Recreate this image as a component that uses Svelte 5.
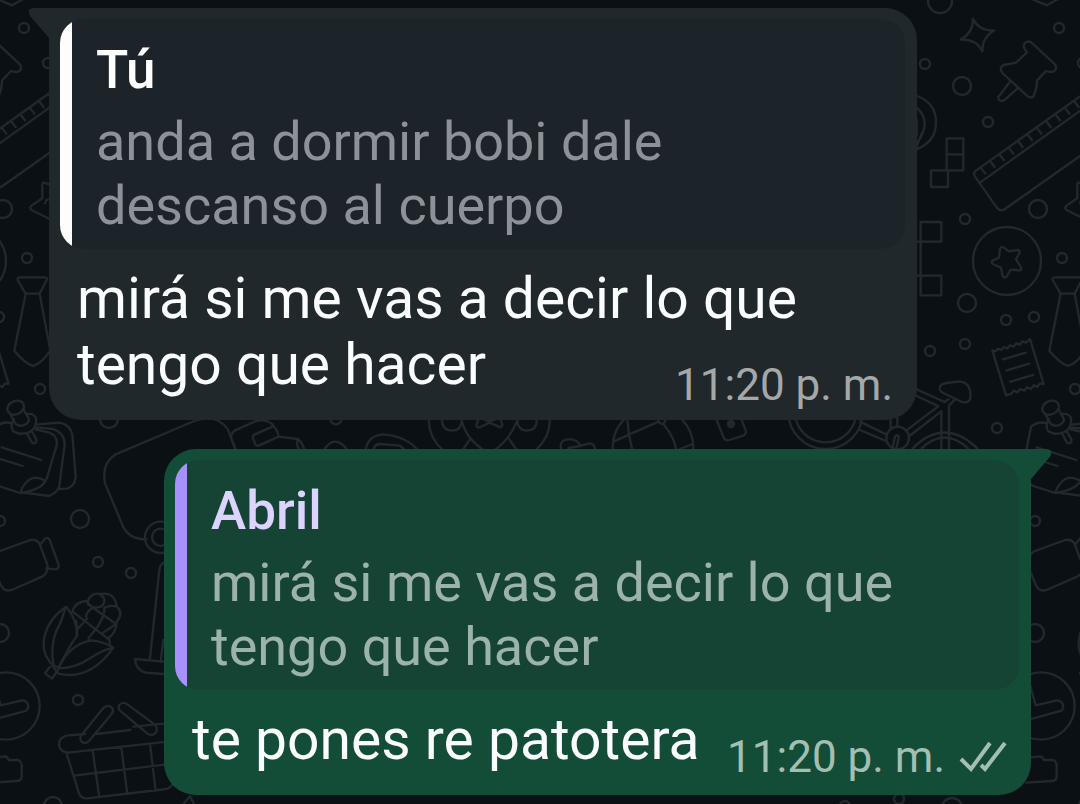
<script>
	const messages = [
		{
			own: false,
			author: 'Tú',
			quote: 'anda a dormir bobi dale descanso al cuerpo',
			text: 'mirá si me vas a decir lo que tengo que hacer',
			time: '11:20 p. m.'
		},
		{
			own: true,
			author: 'Abril',
			quote: 'mirá si me vas a decir lo que tengo que hacer',
			text: 'te pones re patotera',
			time: '11:20 p. m.'
		}
	];

	// small circles scattered over the wallpaper: x, y, radius
	const dots = [
		[24, 28, 5], [940, 1, 12], [925, 64, 5], [962, 86, 9], [988, 122, 5], [48, 63, 5],
		[1038, 209, 9], [965, 219, 5], [1062, 258, 5], [967, 303, 9], [1006, 320, 5],
		[1034, 317, 5], [930, 351, 5], [965, 344, 5], [40, 389, 5], [997, 428, 5],
		[109, 419, 9], [80, 519, 9], [98, 562, 5], [131, 573, 5], [0, 521, 5],
		[0, 633, 9], [78, 700, 5], [53, 806, 9], [899, 799, 5], [952, 808, 10], [845, 806, 5]
	];

	const ticks = [0, 1, 2, 3, 4, 5, 6, 7, 8, 9, 10, 11];
</script>

<svelte:head>
	<title>Chat</title>
</svelte:head>

<main class="chat">
	<svg class="wallpaper" aria-hidden="true">
		<g id="doodles">
			<g class="dots">
				{#each dots as [x, y, r]}
					<circle cx={x} cy={y} {r} />
				{/each}
			</g>

			<!-- sparkle, pushpin, blocks, ruler -->
			<g transform="translate(900 0) scale(.3333)">
				<path d="M398-2L441 16L473-2" />
				<path d="M219 56Q236 93 283 91Q246 113 247 154Q228 116 182 119Q220 97 219 56Z" />
				<path d="M376 151Q366 132 379 126Q390 121 399 132L465 193Q473 208 460 215Q450 218 438 213L411 242Q410 270 401 288Q394 297 383 289L307 219Q296 203 311 195L348 188L381 157Z" />
				<path d="M331 244L295 291Q294 303 306 303L314 300L353 265" />
				<path d="M50 288Q108 308 108 367Q108 425 50 448M50 323Q74 345 74 370Q74 400 50 430M50 360V405M66 398L50 440" />
				<path d="M140 415H190V511H140ZM140 463H190M93 511H144V561H93Z" />
				<path d="M575 264L228 512Q218 519 225 530L290 622Q301 637 315 627L570 447M240 548L570 311" />
				{#each ticks as n}
					<path d="M{242 + n * 28} {503 - n * 20}l14 18" />
				{/each}
				<path d="M570 560L538 548Q532 546 532 555L532 595L500 617Q491 625 501 631L560 660" />
				<path d="M540 610Q543 598 552 598" />
			</g>

			<!-- badge, tie, receipt, bicycle frame -->
			<g transform="translate(900 200) scale(.3333)">
				<path d="M50 125H124V66H62V286H124V227H50" />
				<circle cx="321" cy="183" r="102" />
				<path d="M312 143L326 154L354 150Q362 152 358 160L348 178L364 204Q365 212 356 211L332 209L320 230Q313 236 308 228L303 203L278 192Q271 187 278 182L297 173L300 147Q303 138 312 143Z" />
				<path d="M463 232H540Q548 233 545 240L524 281H482L458 240Q456 233 463 232ZM482 281L448 452Q478 488 504 498Q530 490 556 452L524 281" />
				<path d="M277 451L287 454L294 446L304 450L312 441L323 445L330 436L341 440L349 430L360 434L367 424L378 428L390 417L431 552L420 550L412 561L402 556L392 567L381 562L373 572L361 567L353 577L341 572L333 582L318 586Z" />
				<path d="M309 478L378 458M320 511L388 491M331 545L400 525" />
				<path d="M50 568L134 606L146 598M50 588L115 619L18 692M165 598L147 617V750M124 634L28 708M124 634V750" />
				<path d="M120 561Q122 552 140 549L180 544Q207 548 211 575V596Q204 611 186 606L130 579Q116 572 120 561Z" />
				<path d="M38 745Q133 650 232 745M65 745Q133 680 204 745" />
				<circle cx="-7" cy="714" r="34" />
				<path d="M-24 750L-15 710Q-9 700-3 711L-12 750M-120 665L-40 704M-120 690L-45 722M-28 650V684M-8 650V680" />
			</g>

			<!-- balloons, globe, tag, bicycle wheel -->
			<g transform="translate(420 400) scale(.3333)">
				<circle cx="1217" cy="35" r="112" />
				<circle cx="1217" cy="35" r="92" />
				<path d="M27 60Q25 110 68 150M389 60Q391 110 348 150M66 60Q67 92 97 92Q125 90 125 62Q138 114 190 150M292 60Q293 92 322 92Q350 90 350 62M290 65Q272 114 225 150M150 118L128 150M268 118L290 150" />
				<path d="M169 75L178 52L208 65L240 52L247 75Q245 84 236 80L208 68L180 82Q170 84 169 75Z" />
				<path d="M425 150Q414 120 447 118Q470 117 482 137L510 130Q525 132 525 150M445 144L480 138" />
				<circle cx="699" cy="142" r="121" />
				<path d="M582 124L715 65M622 60Q625 105 637 150M715 60Q718 72 727 72Q735 70 736 60M732 74Q762 110 769 150M780 147L818 132" />
				<path d="M890 60L911 113Q917 124 928 120L970 107Q982 100 976 88L965 60" />
				<circle class="solid" cx="933" cy="72" r="9" />
			</g>

			<!-- whistle, bread -->
			<g transform="translate(200 410) scale(.3333)">
				<path d="M110 125L93 82Q92 70 104 62L165 34Q195 26 216 42Q233 60 236 80L178 106Q168 110 165 100L158 82Q158 76 165 73L217 50M236 80L294 87Q309 100 314 125M294 87Q285 102 302 125" />
				<path d="M391 28Q394 43 408 43Q422 42 425 28M370 122Q405 68 444 122M496 125Q502 75 550 73Q620 78 658 125M520 125Q520 102 540 102L600 107L620 125" />
			</g>

			<!-- notes, suitcase, video camera -->
			<g transform="translate(0 400) scale(.3333)">
				<ellipse cx="47" cy="23" rx="26" ry="20" transform="rotate(-25 47 23)" />
				<path d="M29 39L47 72Q61 83 80 71Q89 64 86 56L70 27M42 56Q29 77 39 93Q56 108 89 96Q112 81 108 54Q101 39 82 42M81 100L94 125Q101 134 109 126L109 118L96 95" />
				<path d="M36 70Q10 62-12 80L-40 220L-8 257L60 279Q75 238 103 233Q119 233 137 242Q122 271 60 279M106 88L145 97Q174 105 170 136L140 236M108 82L158 87Q194 98 194 133L178 258Q171 280 147 288L70 278M108 74L178 68Q210 73 217 104L227 230Q225 260 200 266L178 267M5 142L124 180M-20 171L68 198" />
				<path d="M440 418Q392 420 370 382L315 250Q304 190 347 163L576 66Q649 36 684 89L707 150" />
				<circle cx="482" cy="412" r="47" />
				<circle cx="482" cy="412" r="26" />
				<path d="M-5 455L91 420Q112 416 120 435L142 494Q146 517 128 529L35 570Q11 577 2 554L-28 480ZM120 434L136 415Q145 411 149 420L176 495Q178 506 167 508L139 505" />
				<path d="M500 486Q480 488 478 510L450 775M490 720L482 785" />
			</g>

			<!-- corn, clock, basket, folder -->
			<g transform="translate(0 580) scale(.3333)">
				<path d="M158 255Q122 219 134 167Q148 113 199 80Q232 120 231 167Q206 202 176 263Z" />
				<path d="M195 88Q185 125 168 155Q150 205 161 256M176 263Q207 195 272 181Q311 184 340 203Q270 303 176 281L158 259M176 265Q226 265 270 235Q309 209 340 203" />
				<path d="M150 260L135 280L156 296L174 270" />
				<path d="M217 94Q226 64 263 63Q275 36 300 42Q345 34 350 80Q372 98 350 126Q348 158 326 174L330 190M263 63Q266 80 286 83Q316 82 313 56L300 42M217 94L326 178M263 72L348 132M313 83Q332 74 350 80M313 83Q316 104 294 138L265 176M348 132Q322 150 306 160M278 83Q252 100 260 118L235 145M228 122Q232 140 231 167" />
				<circle cx="18" cy="378" r="101" />
				<path d="M-14 318L2 376L66 361Q79 361 84 374Q87 387 77 393L-5 415Q-20 418-27 400L-45 330" />
				<path d="M-45 545L-10 532L15 529Q22 529 26 540L55 540Q65 545 65 557V588Q65 602 50 603L-27 608" />
				<path d="M255 462L199 467Q178 473 177 493Q179 516 204 518L510 484M199 518L236 637Q242 656 262 655L500 627Q515 620 520 610M290 462L391 450M400 440L500 430M278 511L298 652M364 502L382 642M450 492L467 632M222 587L500 553" />
				<path d="M242 468L310 384Q327 370 338 386Q342 396 333 404L267 483Q255 495 244 484Q239 476 242 468ZM360 373Q372 364 383 374L462 432Q476 444 467 459Q457 469 444 462L360 392Q352 382 360 373Z" />
				<path d="M405 237L490 245M405 237Q407 270 437 278L490 282M550 672L570 648L582 672" />
			</g>
		</g>
		<use href="#doodles" x="1035" />
		<use href="#doodles" x="-1035" />
	</svg>

	{#each messages as message}
		<article class="bubble" class:own={message.own}>
			<svg class="tail" viewBox="0 0 24 32" aria-hidden="true">
				<path d="M24 0H5Q-1 0 0 5Q0 7 2 9L20 30V32H24Z" />
			</svg>
			<blockquote class="quote">
				<strong>{message.author}</strong>
				<p>{message.quote}</p>
			</blockquote>
			<p class="body">
				{message.text}
				<span class="meta">
					<time>{message.time}</time>
					{#if message.own}
						<svg class="checks" viewBox="0 0 48 32" role="img" aria-label="Entregado">
							<path d="M2 18L12 28L31 2M22 24L26 28L46 2" />
						</svg>
					{/if}
				</span>
			</p>
		</article>
	{/each}
</main>

<style>
	:global(body) {
		margin: 0;
		background: #0b1014;
	}
	.chat {
		position: relative;
		box-sizing: border-box;
		min-height: 100vh;
		padding: 8px 49px;
		display: flex;
		flex-direction: column;
		gap: 29px;
		overflow: hidden;
		font-family: Roboto, sans-serif;
	}
	.wallpaper {
		position: absolute;
		top: 0;
		left: 0;
		width: 100%;
		height: 100%;
		fill: none;
		stroke: #23282c;
		stroke-width: 7;
		stroke-linejoin: round;
		stroke-linecap: round;
	}
	.dots {
		stroke-width: 2.4;
	}
	.solid {
		fill: #23282c;
	}

	/* Bubbles */
	.bubble {
		position: relative;
		margin-right: 114px;
		padding: 11px 12px 9px 11px;
		border-radius: 0 32px 32px 32px;
		background: #20282b;
		color: #fafcfd;
	}
	.bubble.own {
		margin-right: 0;
		margin-left: 115px;
		padding-bottom: 12px;
		border-radius: 32px 0 32px 32px;
		background: #144d37;
	}
	.tail {
		position: absolute;
		top: 0;
		left: -20px;
		width: 24px;
		height: 32px;
		fill: #20282b;
	}
	.own .tail {
		left: auto;
		right: -20px;
		transform: scaleX(-1);
		fill: #144d37;
	}

	/* Quoted message, the stripe is part of the background so it keeps a straight inner edge */
	.quote {
		margin: 0;
		padding: 19px 20px 11px 36px;
		border-radius: 24px;
		background: linear-gradient(to right, #fdfdfd 12px, #1d2429 12px);
		color: #8c9297;
		font-size: 53px;
		line-height: 64px;
	}
	.own .quote {
		background: linear-gradient(to right, #a791ff 12px, #154434 12px);
		color: #9cb3a9;
	}
	.quote strong {
		display: block;
		margin-bottom: 8px;
		color: #fdfdfd;
		font-weight: 500;
	}
	.own .quote strong {
		color: #dcd3ff;
	}
	.quote p {
		margin: 0;
		font-size: 54px;
	}

	.body {
		display: flow-root;
		margin: 17px 12px 0 17px;
		font-size: 57px;
		line-height: 66px;
	}

	/* Floats beside the last line of the message */
	.meta {
		float: right;
		display: flex;
		align-items: center;
		gap: 14px;
		margin-top: 27px;
		color: #a4a8aa;
		font-size: 44px;
		line-height: 52px;
	}
	.own .meta {
		margin-top: 24px;
		color: #a3bfb3;
	}
	.checks {
		width: 48px;
		height: 32px;
		fill: none;
		stroke: #a3bfb3;
		stroke-width: 4;
	}
</style>
